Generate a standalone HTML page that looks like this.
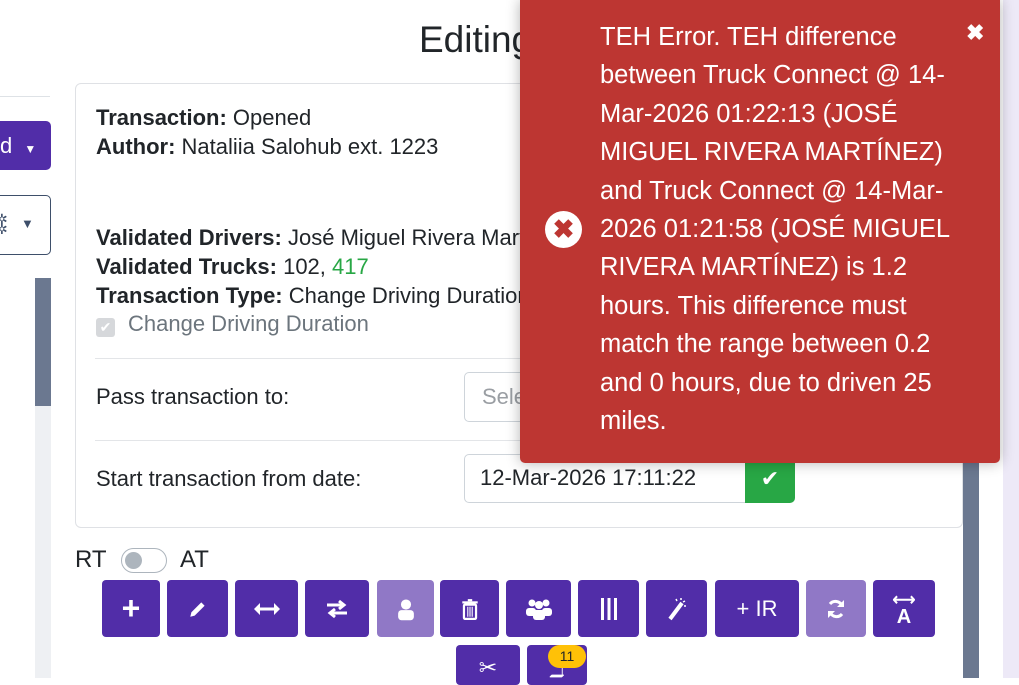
<!DOCTYPE html>
<html><head><meta charset="utf-8"><style>
*{box-sizing:border-box;margin:0;padding:0}
body{width:1019px;height:678px;overflow:hidden;background:#fff;font-family:"Liberation Sans",Arial,sans-serif;color:#212529;position:relative}
.abs{position:absolute}
.card{left:75px;top:83px;width:888px;height:445px;border:1px solid #dfe1e5;border-radius:6px}
.t{font-size:22px;line-height:29px}
b{font-weight:700}
.btn{position:absolute;top:580px;height:57px;background:#512da8;border-radius:4px;color:#fff;display:flex;align-items:center;justify-content:center;font-size:22px}
.btn.l{background:#9078c6}
.btn2{top:645px;height:40px}
</style></head><body>
<div class="abs" style="left:0;top:96px;width:50px;height:1px;background:#dee2e6"></div>
<div class="abs" style="left:0;top:121px;width:51px;height:49px;background:#512da8;border-radius:0 5px 5px 0;color:#fff;font-size:22px;line-height:49px">d <span style="font-size:12px;margin-left:6px">▼</span></div>
<div class="abs" style="left:-5px;top:195px;width:56px;height:60px;border:1px solid #3e4f6a;border-radius:5px;color:#3e4f6a"><span style="position:absolute;left:0;top:18px;font-size:14px;line-height:10px">✲<br>✲</span><span style="position:absolute;left:25px;top:20px;font-size:13px">▼</span></div>
<div class="abs" style="left:35px;top:278px;width:16px;height:128px;background:#6b7890"></div>
<div class="abs" style="left:35px;top:406px;width:16px;height:272px;background:#eef0f3"></div>
<div class="abs" style="left:963px;top:0;width:16px;height:678px;background:#6b7890"></div>
<div class="abs" style="left:1003px;top:0;width:16px;height:678px;background:#ede9f7"></div>
<div class="abs" style="left:419px;top:19px;font-size:37px;color:#212529">Editing</div>
<div class="abs card"></div>
<div class="abs t" style="left:96px;top:103px"><b>Transaction:</b> Opened<br><b>Author:</b> Nataliia Salohub ext. 1223</div>
<div class="abs t" style="left:96px;top:223px;white-space:nowrap"><b>Validated Drivers:</b> José Miguel Rivera Martínez<br><b>Validated Trucks:</b> 102, <span style="color:#28a745">417</span><br><b>Transaction Type:</b> Change Driving Duration<br></div>
<div class="abs" style="left:96px;top:318px;width:19px;height:19px;background:#d6d8db;border-radius:3px;color:#fff;font-size:14px;text-align:center;line-height:19px">✔</div>
<div class="abs t" style="left:128px;top:309px;color:#6c757d">Change Driving Duration</div>
<div class="abs" style="left:95px;top:358px;width:847px;height:1px;background:#e3e5e8"></div>
<div class="abs t" style="left:96px;top:382px">Pass transaction to:</div>
<div class="abs" style="left:464px;top:372px;width:200px;height:50px;border:1px solid #ced4da;border-radius:5px;font-size:22px;color:#9a9ea3;padding:11px 17px">Select</div>
<div class="abs" style="left:95px;top:440px;width:847px;height:1px;background:#e3e5e8"></div>
<div class="abs t" style="left:96px;top:464px">Start transaction from date:</div>
<div class="abs" style="left:464px;top:454px;width:282px;height:49px;border:1px solid #ced4da;border-radius:5px 0 0 5px;font-size:22px;padding:10px 15px">12-Mar-2026 17:11:22</div>
<div class="abs" style="left:745px;top:454px;width:50px;height:49px;background:#28a745;border-radius:0 5px 5px 0;color:#fff;font-size:22px;text-align:center;line-height:49px">✔</div>
<div class="abs" style="left:75px;top:546px;font-size:24px">RT</div>
<div class="abs" style="left:121px;top:548px;width:46px;height:25px;border:1px solid #adb5bd;border-radius:13px"><div style="position:absolute;left:3px;top:3px;width:17px;height:17px;border-radius:50%;background:#adb5bd"></div></div>
<div class="abs" style="left:180px;top:546px;font-size:24px">AT</div>
<div class="btn" style="left:102px;width:58px;font-size:32px;font-weight:bold">+</div>
<div class="btn" style="left:167px;width:61px"><svg width="22" height="22" viewBox="0 0 20 20"><path d="M3 17l1-4 9-9 3 3-9 9z" fill="#fff"/></svg></div>
<div class="btn" style="left:235px;width:63px"><svg width="26" height="14" viewBox="0 0 26 14"><path d="M3 7h20" stroke="#fff" stroke-width="3"/><path d="M0 7l6-6v12zM26 7l-6-6v12z" fill="#fff"/></svg></div>
<div class="btn" style="left:305px;width:64px"><svg width="24" height="20" viewBox="0 0 24 20"><path d="M2 6h16M14 2l5 4-5 4M22 14H6M10 10l-5 4 5 4" stroke="#fff" stroke-width="3" fill="none"/></svg></div>
<div class="btn l" style="left:377px;width:57px"><svg width="18" height="24" viewBox="0 0 16 20"><circle cx="8" cy="6" r="4.5" fill="#fff"/><rect x="1" y="11" width="14" height="9" rx="3" fill="#fff"/></svg></div>
<div class="btn" style="left:440px;width:59px"><svg width="18" height="22" viewBox="0 0 16 20"><rect x="1" y="3" width="14" height="2" fill="#fff"/><rect x="6" y="1" width="4" height="2" fill="#fff"/><rect x="2.5" y="6" width="11" height="13" rx="1" fill="none" stroke="#fff" stroke-width="2"/><path d="M6 8v9M8 8v9M10 8v9" stroke="#fff"/></svg></div>
<div class="btn" style="left:506px;width:65px"><svg width="28" height="24" viewBox="0 0 28 22"><circle cx="7" cy="5" r="3.5" fill="#fff"/><circle cx="21" cy="5" r="3.5" fill="#fff"/><circle cx="14" cy="7" r="4" fill="#fff"/><rect x="1" y="10" width="10" height="8" rx="3" fill="#fff"/><rect x="17" y="10" width="10" height="8" rx="3" fill="#fff"/><rect x="8" y="12" width="12" height="10" rx="3" fill="#fff"/></svg></div>
<div class="btn" style="left:578px;width:61px"><svg width="18" height="24" viewBox="0 0 18 22"><rect x="1" y="0" width="3" height="22" fill="#fff"/><rect x="7.5" y="0" width="3" height="22" fill="#fff"/><rect x="14" y="0" width="3" height="22" fill="#fff"/></svg></div>
<div class="btn" style="left:646px;width:61px"><svg width="22" height="26" viewBox="0 0 22 24"><path d="M4 22L16 6" stroke="#fff" stroke-width="4"/><path d="M10 2l1 2M15 1v2M19 4l-2 1M20 9h-2" stroke="#fff" stroke-width="1.5"/></svg></div>
<div class="btn" style="left:715px;width:84px">+ IR</div>
<div class="btn l" style="left:806px;width:60px"><svg width="20" height="22" viewBox="0 0 20 22"><path d="M16 8a7 7 0 0 0-12-2M4 14a7 7 0 0 0 12 2" stroke="#fff" stroke-width="3" fill="none"/><path d="M18 2v7h-7zM2 20v-7h7z" fill="#fff"/></svg></div>
<div class="btn" style="left:873px;width:62px;flex-direction:column;font-size:20px;font-weight:bold;line-height:16px"><span style="font-size:16px">⟷</span>A</div>
<div class="btn btn2" style="left:456px;width:64px;align-items:flex-end;padding-bottom:4px">✂</div>
<div class="btn btn2" style="left:527px;width:60px;align-items:flex-end;padding-bottom:2px">ℶ</div>
<div class="abs" style="left:548px;top:645px;width:38px;height:23px;background:#ffc107;border-radius:12px;font-size:14px;text-align:center;line-height:23px;color:#212529">11</div>
<div class="abs" style="left:520px;top:0;width:480px;height:463px;background:#bd3632;border-radius:0 0 5px 5px;box-shadow:0 0 14px rgba(0,0,0,.3)"></div>
<div class="abs" style="left:545px;top:211px;width:37px;height:37px;border-radius:50%;background:#fff;color:#bd3632;font-size:26px;font-weight:bold;text-align:center;line-height:37px">✖</div>
<div class="abs" style="left:966px;top:20px;color:#fff;font-size:22px;font-weight:bold">✖</div>
<div class="abs" style="left:600px;top:18px;width:360px;color:#fff;font-size:25.5px;line-height:38.4px">TEH Error. TEH difference between Truck Connect @ 14-Mar-2026 01:22:13 (JOSÉ MIGUEL RIVERA MARTÍNEZ) and Truck Connect @ 14-Mar-2026 01:21:58 (JOSÉ MIGUEL RIVERA MARTÍNEZ) is 1.2 hours. This difference must match the range between 0.2 and 0 hours, due to driven 25 miles.</div>
</body></html>
